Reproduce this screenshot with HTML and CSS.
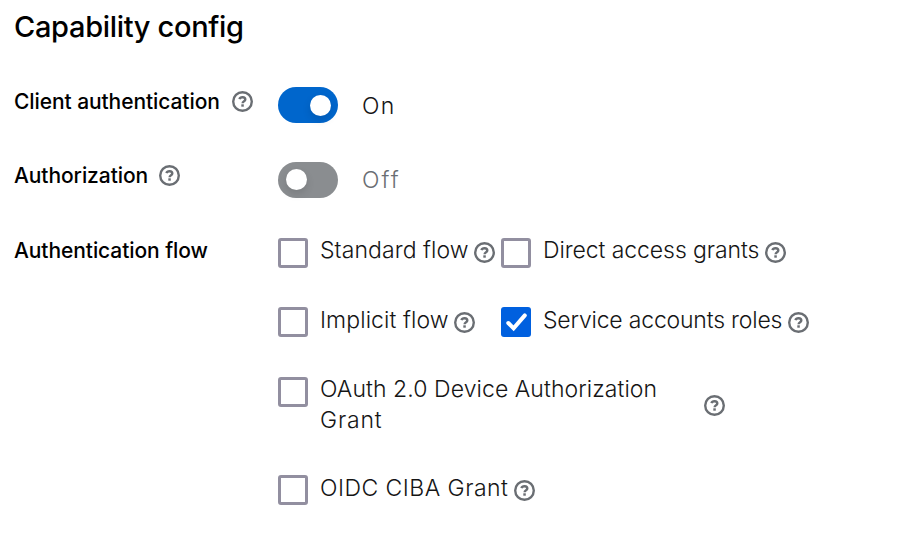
FILE: index.html
```html
<!DOCTYPE html>
<html lang="en">
<head>
<meta charset="utf-8">
<title>Capability config</title>
<link rel="stylesheet" href="styles.css">
</head>
<body>
<svg class="symbols" aria-hidden="true">
  <symbol id="help" viewBox="0 0 21 21">
    <circle cx="10.5" cy="10.5" r="9.3" fill="none" stroke="currentColor" stroke-width="2.4"/>
    <path d="M7.4 8.1C8.3 5.6 13.3 5.7 13.3 8.4C13.3 10.3 10.6 10 10.6 12.3" fill="none" stroke="currentColor" stroke-width="2.4"/>
    <path d="M9.3 13.3h2.5v2.4h-2.5z" fill="currentColor"/>
  </symbol>
</svg>
<form class="config">
  <h1 class="title">Capability config</h1>
  <div class="row row-client">
    <div class="label"><span class="label-text t-client">Client authentication</span><svg class="help"><use href="#help"/></svg></div>
    <div class="switch on"><span class="track"><span class="knob"></span></span><span class="text t-on">On</span></div>
  </div>
  <div class="row row-authz">
    <div class="label"><span class="label-text t-authz">Authorization</span><svg class="help"><use href="#help"/></svg></div>
    <div class="switch off"><span class="track"><span class="knob"></span></span><span class="text t-off">Off</span></div>
  </div>
  <div class="row row-flow">
    <div class="label"><span class="label-text t-flow">Authentication flow</span></div>
    <div class="options">
      <div class="option"><span class="box"></span><span class="text t-standard">Standard flow</span><svg class="help"><use href="#help"/></svg></div>
      <div class="option"><span class="box"></span><span class="text t-direct">Direct access grants</span><svg class="help"><use href="#help"/></svg></div>
      <div class="option"><span class="box"></span><span class="text t-implicit">Implicit flow</span><svg class="help"><use href="#help"/></svg></div>
      <div class="option"><span class="box checked"><svg class="check" viewBox="0 0 30 30"><path d="M7.3 16L12.6 21.3L23.8 8.4" fill="none" stroke="#fff" stroke-width="4" stroke-linecap="round"/></svg></span><span class="text t-service">Service accounts roles</span><svg class="help"><use href="#help"/></svg></div>
      <div class="option wide oauth"><span class="box"></span><span class="text t-oauth">OAuth 2.0 Device Authorization<br><span class="t-grant">Grant</span></span><svg class="help"><use href="#help"/></svg></div>
      <div class="option wide"><span class="box"></span><span class="text t-oidc">OIDC CIBA Grant</span><svg class="help"><use href="#help"/></svg></div>
    </div>
  </div>
</form>
</body>
</html>
```
FILE: styles.css
```css
* { box-sizing: border-box; }
body { margin: 0; background: #fff; color: #151515; font-family: Inter, "Liberation Sans", sans-serif; }
.symbols { position: absolute; width: 0; height: 0; }
.config { padding: 9px 14px 0; }
.title { margin: 0; height: 36px; font-size: 29px; line-height: 36px; font-weight: 500; letter-spacing: -0.32px; color: #000; white-space: nowrap; }
.row { display: grid; grid-template-columns: 264px 1fr; align-items: start; }
.row-client { margin-top: 42px; height: 75px; }
.row-authz { height: 76px; }
.label { display: flex; align-items: center; height: 29px; color: #000; }
.row-authz .label { height: 27px; }
.row-flow .label { height: 25px; }
.label-text { font-size: 21px; line-height: 28px; font-weight: 500; letter-spacing: -0.08px; white-space: nowrap; }
.help { display: block; flex: none; width: 21px; height: 21px; color: #6a6e73; }
.text { font-size: 23px; line-height: 31px; font-weight: 300; white-space: nowrap; }
.switch { display: flex; align-items: center; gap: 24px; height: 36px; }
.track { display: flex; align-items: center; width: 60px; height: 36px; padding: 0 8px; border-radius: 18px; background: #8a8d90; }
.on .track { justify-content: flex-end; padding-right: 7px; background: #06c; }
.knob { width: 21px; height: 21px; border-radius: 50%; background: #fff; box-shadow: 0 4px 8px rgba(0, 0, 0, .12); }
.off .knob { margin-top: -1px; }
.on .text { padding-top: 2px; }
.off .text { color: #6a6e73; }
.options { display: grid; grid-template-columns: 223px 1fr; grid-template-rows: 69px 70px 98px 40px; }
.option { display: flex; align-items: flex-start; }
.option .text { margin: -3px 6px 0 12px; }
.option .help { margin-top: 4px; }
.option:nth-child(3) .help, .option:nth-child(4) .help, .option:nth-child(6) .help { margin-top: 5px; }
.option:nth-child(3) .text, .option:nth-child(4) .text, .option:nth-child(6) .text { margin-top: -2px; }
.wide { grid-column: 1 / -1; }
.oauth .help { margin-top: 18px; }
.box { flex: none; width: 30px; height: 30px; border: 3px solid #928fa0; border-radius: 3px; }
.checked { border: 0; background: #0060df; }
.check { display: block; width: 30px; height: 30px; }
.t-client { width: 218px; }
.t-authz { width: 145px; }
.t-on { letter-spacing: 1.4px; }
.t-off { letter-spacing: 2px; }
.t-standard { width: 148px; letter-spacing: .08px; }
.t-direct { width: 216px; letter-spacing: -.08px; }
.t-implicit { width: 128px; letter-spacing: .08px; }
.t-service { width: 239px; letter-spacing: -.19px; }
.t-oauth { width: 378px; letter-spacing: .07px; }
.t-grant { letter-spacing: .8px; }
.t-oidc { width: 188px; letter-spacing: .47px; }
```
